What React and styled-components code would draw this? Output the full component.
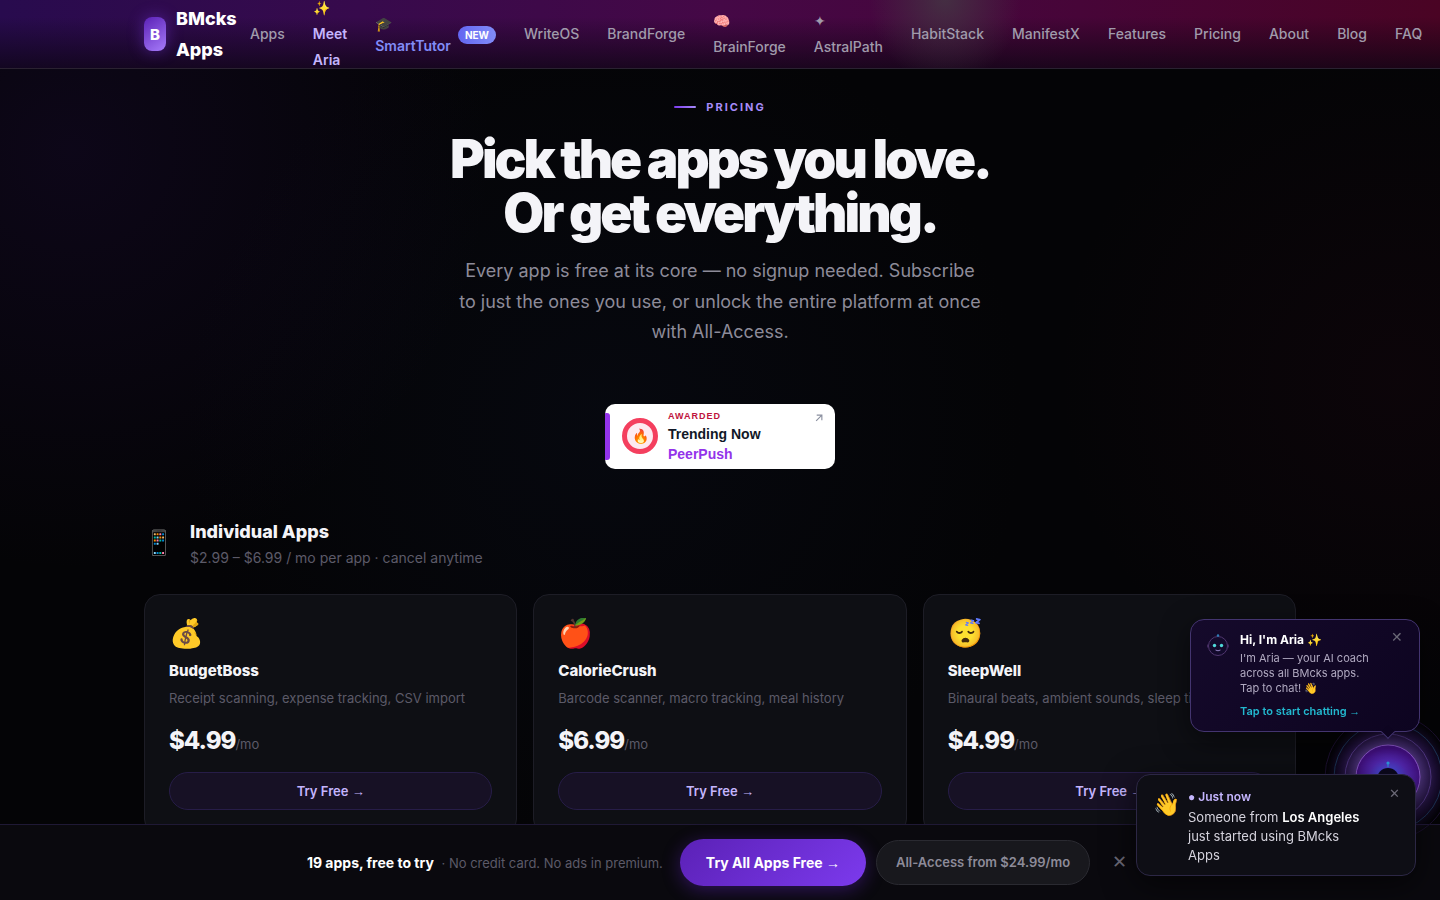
import React, { useState } from "react";
import styled, { createGlobalStyle, css } from "styled-components";

const GlobalStyle = createGlobalStyle`
  *, *::before, *::after {
    box-sizing: border-box;
  }
  html {
    overflow: hidden auto;
    scrollbar-width: none;
  }
  body {
    margin: 0;
    background: #030305;
    color: #f4f4f8;
    font-family: Inter, "Noto Sans", sans-serif;
  }
  h1, h2, h3, p, ul {
    margin: 0;
    padding: 0;
  }
  a {
    color: inherit;
    text-decoration: none;
  }
  button {
    font-family: inherit;
    border: 0;
    background: none;
    padding: 0;
    cursor: pointer;
  }
`;

const Page = styled.div`
  min-height: 100vh;
  overflow: hidden;
  background:
    radial-gradient(circle 420px at 5% 150px, rgba(60, 20, 120, 0.16), transparent),
    radial-gradient(circle 340px at 97% 380px, rgba(90, 10, 40, 0.09), transparent),
    radial-gradient(circle 420px at 42% 420px, rgba(16, 24, 50, 0.2), transparent),
    #040406;
`;

/* arrows and dots keep the plain system look */
const Glyph = styled.span`
  font-family: "Liberation Sans", Arial, sans-serif;
`;

/* ---------- nav ---------- */

const Nav = styled.nav`
  height: 69px;
  border-bottom: 1px solid #2a2231;
  background:
    radial-gradient(ellipse 76px 84px at 945px 0, rgba(68, 56, 68, 0.8), transparent),
    linear-gradient(180deg, transparent 25%, rgba(12, 5, 18, 0.75) 100%),
    linear-gradient(90deg, #280b4e 0%, #370a4c 25%, #450846 50%, #470538 75%, #4a0424 100%);
`;

const Container = styled.div`
  max-width: 1200px;
  margin: 0 auto;
  padding: 0 24px;
`;

const NavInner = styled(Container)`
  display: flex;
  align-items: center;
  gap: 12px;
  height: 100%;
`;

const Logo = styled.a`
  display: flex;
  align-items: center;
  gap: 10px;
  width: 94px;
  flex: none;
  color: #fff;
  font-size: 18px;
  font-weight: 800;
  line-height: 31px;
`;

const LogoMark = styled.span`
  display: grid;
  place-items: center;
  width: 22px;
  height: 34px;
  flex: none;
  border-radius: 8px;
  background: linear-gradient(145deg, #5b21b6, #a67bfa);
  box-shadow: 0 0 16px rgba(124, 58, 237, 0.45);
  font-size: 15px;
`;

const NavLinks = styled.ul`
  display: flex;
  align-items: center;
  gap: 28px;
  list-style: none;
`;

const tones = {
  aria: css`
    color: #c4b5fd;
    font-weight: 600;
  `,
  tutor: css`
    padding-top: 2px;
    color: #818cf8;
    font-weight: 600;
    line-height: 22px;
  `,
};

const NavLink = styled.a`
  display: flex;
  align-items: center;
  gap: 7px;
  color: #a09bab;
  font-size: 14px;
  font-weight: 500;
  line-height: 26px;
  ${({ $tone }) => tones[$tone]}
`;

const NavText = styled.span`
  width: min-content;
`;

const NewTag = styled.span`
  padding: 0 7px;
  border-radius: 10px;
  background: linear-gradient(90deg, #6366f1, #818cf8);
  color: #fff;
  font-size: 10px;
  font-weight: 700;
  line-height: 18px;
`;

/* ---------- hero ---------- */

const Hero = styled.header`
  display: flex;
  flex-direction: column;
  align-items: center;
  padding: 28px 24px 0;
  text-align: center;
`;

const Eyebrow = styled.p`
  display: flex;
  align-items: center;
  gap: 10px;
  color: #a78bfa;
  font-size: 11px;
  font-weight: 700;
  letter-spacing: 2px;
  line-height: 20px;

  &::before {
    content: "";
    width: 22px;
    height: 2px;
    border-radius: 1px;
    background: linear-gradient(90deg, #7c3aed, #a78bfa);
  }
`;

const Title = styled.h1`
  margin-top: 15px;
  font-size: 53px;
  font-weight: 900;
  letter-spacing: -3px;
  line-height: 54px;
`;

const Lead = styled.p`
  max-width: 526px;
  margin-top: 16px;
  color: #8d8b99;
  font-size: 18px;
  line-height: 1.7;
`;

const Award = styled.a`
  position: relative;
  display: flex;
  align-items: center;
  gap: 10px;
  width: 230px;
  height: 65px;
  margin-top: 56px;
  padding-left: 17px;
  overflow: hidden;
  border-radius: 10px;
  background: #fff;
  text-align: left;

  &::before {
    content: "";
    position: absolute;
    top: 9px;
    bottom: 9px;
    left: 0;
    width: 5px;
    border-radius: 0 3px 3px 0;
    background: #9333ea;
  }
`;

const AwardSeal = styled.span`
  display: grid;
  place-items: center;
  width: 36px;
  height: 36px;
  border: 5px solid #f43f5e;
  border-radius: 50%;
  background: #fdeaf0;
  font-size: 14px;
  line-height: 1;
`;

const AwardText = styled.span`
  display: flex;
  flex-direction: column;
  color: #111827;
  font-family: "Liberation Sans", Arial, sans-serif;
  font-size: 14px;
  font-weight: 700;
  line-height: 20px;
`;

const AwardLabel = styled.span`
  color: #be123c;
  font-size: 9px;
  letter-spacing: 1px;
  line-height: 16px;
`;

const AwardBrand = styled.span`
  color: #9333ea;
`;

const AwardArrow = styled.svg`
  position: absolute;
  top: 10px;
  right: 12px;
`;

/* ---------- apps ---------- */

const SectionHead = styled.div`
  display: flex;
  align-items: center;
  gap: 16px;
  margin-top: 48px;
`;

const SectionIcon = styled.span`
  width: 30px;
  font-size: 24px;
  line-height: 32px;
`;

const SectionTitle = styled.h2`
  font-size: 18px;
  font-weight: 800;
  line-height: 30px;
`;

const SectionNote = styled.p`
  color: #5c5a68;
  font-size: 14px;
  line-height: 22px;
`;

const Grid = styled.div`
  display: grid;
  grid-template-columns: repeat(3, 1fr);
  gap: 16px;
  margin-top: 25px;
  padding-bottom: 120px;
`;

const Card = styled.article`
  display: flex;
  flex-direction: column;
  padding: 20px 24px 24px;
  border: 1px solid #1d1d26;
  border-radius: 16px;
  background: #0e0f14;
`;

const CardIcon = styled.span`
  font-size: 28px;
  line-height: 36px;
`;

const CardName = styled.h3`
  margin-top: 7px;
  font-size: 15px;
  font-weight: 800;
  line-height: 26px;
`;

const CardText = styled.p`
  margin-top: 4px;
  overflow: hidden;
  color: #5c5a68;
  font-size: 13px;
  line-height: 20px;
  white-space: nowrap;
`;

const Price = styled.p`
  margin-top: 14px;
  font-size: 24px;
  font-weight: 800;
  letter-spacing: -1px;
  line-height: 38px;
`;

const Per = styled.span`
  color: #5c5a68;
  font-size: 13px;
  font-weight: 400;
  letter-spacing: 0;
`;

const TryButton = styled.button`
  height: 38px;
  margin-top: 9px;
  border: 1px solid #271d48;
  border-radius: 19px;
  background: #171125;
  color: #c4b5fd;
  font-size: 13px;
  font-weight: 600;
`;

/* ---------- floating pieces ---------- */

const StickyBar = styled.aside`
  position: fixed;
  right: 0;
  bottom: 0;
  left: 0;
  display: flex;
  align-items: center;
  justify-content: center;
  height: 76px;
  padding: 0 6px 1px 0;
  border-top: 1px solid #1f1935;
  background: #0a090e;
`;

const BarText = styled.p`
  margin-right: 17px;
  color: #5c5a68;
  font-size: 13px;
`;

const BarStrong = styled.strong`
  margin-right: 4px;
  color: #fff;
  font-size: 14px;
  font-weight: 700;
`;

const PrimaryButton = styled.button`
  height: 47px;
  margin-right: 10px;
  padding: 0 26px;
  border-radius: 24px;
  background: linear-gradient(135deg, #5b21b6, #7c3aed);
  box-shadow: 0 4px 18px rgba(91, 33, 182, 0.45);
  color: #fff;
  font-size: 14px;
  font-weight: 700;
`;

const GhostButton = styled.button`
  height: 45px;
  margin-right: 22px;
  padding: 0 19px;
  border: 1px solid #2a2a31;
  border-radius: 23px;
  background: #18181d;
  color: #8d8b99;
  font-size: 13px;
  font-weight: 600;
`;

const CloseButton = styled.button`
  color: #6b6977;
  font-size: ${({ $size }) => $size}px;
  line-height: 16px;
`;

const Orb = styled.button`
  position: fixed;
  right: -12px;
  bottom: 59px;
  width: 128px;
  height: 128px;

  svg {
    display: block;
  }
`;

const Bubble = styled.aside`
  position: fixed;
  right: 20px;
  bottom: 168px;
  display: flex;
  align-items: flex-start;
  gap: 11px;
  width: 230px;
  height: 113px;
  padding: 12px 16px;
  border: 1px solid #43346f;
  border-radius: 14px;
  background: linear-gradient(135deg, #150a2b, #0d0420);
  box-shadow: 0 8px 28px rgba(0, 0, 0, 0.5);

  &::after {
    content: "";
    position: absolute;
    right: 26px;
    bottom: -6px;
    width: 10px;
    height: 10px;
    border: solid #43346f;
    border-width: 0 1px 1px 0;
    background: #0d0420;
    transform: rotate(45deg);
  }
`;

const BubbleBody = styled.div`
  flex: 1;
`;

const BubbleTitle = styled.p`
  color: #fff;
  font-size: 12px;
  font-weight: 700;
  line-height: 16px;
`;

const BubbleText = styled.p`
  margin-top: 3px;
  color: #b0a9c0;
  font-size: 11px;
  line-height: 15px;
  white-space: nowrap;
`;

const BubbleLink = styled.a`
  display: block;
  margin-top: 7px;
  color: #22b8cf;
  font-size: 11px;
  font-weight: 600;
  line-height: 16px;
`;

const BubbleClose = styled(CloseButton)`
  position: absolute;
  top: 9px;
  right: 16px;
`;

const Toast = styled.aside`
  position: fixed;
  right: 24px;
  bottom: 24px;
  display: flex;
  align-items: flex-start;
  gap: 8px;
  width: 280px;
  height: 102px;
  padding: 12px 16px;
  border: 1px solid #2c2745;
  border-radius: 14px;
  background: #0e0e15;
  box-shadow: 0 8px 32px rgba(0, 0, 0, 0.6);
`;

const ToastIcon = styled.span`
  width: 27px;
  flex: none;
  font-size: 22px;
  line-height: 34px;
`;

const ToastTime = styled.p`
  color: #c4b5fd;
  font-size: 12px;
  font-weight: 600;
  line-height: 20px;
`;

const ToastText = styled.p`
  max-width: 180px;
  margin-top: 1px;
  color: #d4d2dc;
  font-size: 13px;
  line-height: 19px;

  strong {
    color: #fff;
    font-weight: 600;
  }
`;

const ToastClose = styled(CloseButton)`
  position: absolute;
  top: 10px;
  right: 15px;
`;

const links = [
  { label: "Apps" },
  { label: "✨ Meet Aria", tone: "aria" },
  { label: "🎓 SmartTutor", tone: "tutor", tag: "NEW" },
  { label: "WriteOS" },
  { label: "BrandForge" },
  { label: "🧠 BrainForge" },
  { label: "✦ AstralPath" },
  { label: "HabitStack" },
  { label: "ManifestX" },
  { label: "Features" },
  { label: "Pricing" },
  { label: "About" },
  { label: "Blog" },
  { label: "FAQ" },
];

const apps = [
  { icon: "💰", name: "BudgetBoss", text: "Receipt scanning, expense tracking, CSV import", price: "$4.99" },
  { icon: "🍎", name: "CalorieCrush", text: "Barcode scanner, macro tracking, meal history", price: "$6.99" },
  { icon: "😴", name: "SleepWell", text: "Binaural beats, ambient sounds, sleep timer", price: "$4.99" },
];

function AriaFace() {
  return (
    <svg width="22" height="26" viewBox="0 0 22 26" fill="none" aria-hidden="true">
      <circle cx="11" cy="14" r="9.5" fill="#130a2c" stroke="#50366f" />
      <path d="M11 4.500V3" stroke="#2e7fb8" />
      <circle cx="11" cy="3.5" r="1.2" fill="#2e7fb8" />
      <path d="M.8 12.500v3M21.200 12.500v3" stroke="#50366f" />
      <circle cx="7.5" cy="13.5" r="1.7" fill="#4fd8d8" />
      <circle cx="14.5" cy="13.5" r="1.7" fill="#4fd8d8" />
      <path d="M8.500 18q2.500 1.600 5 0" stroke="#8f7fc0" />
    </svg>
  );
}

function AriaOrb() {
  return (
    <svg width="128" height="128" viewBox="0 0 128 128" fill="none" aria-hidden="true">
      <defs>
        <radialGradient id="halo">
          <stop offset="0.5" stopColor="#6a48a8" stopOpacity="0.7" />
          <stop offset="0.75" stopColor="#40207a" stopOpacity="0.4" />
          <stop offset="1" stopColor="#2c1060" stopOpacity="0" />
        </radialGradient>
        <radialGradient id="core" cx="0.5" cy="0.55">
          <stop offset="0.3" stopColor="#4a4fe0" />
          <stop offset="0.65" stopColor="#5327b0" />
          <stop offset="1" stopColor="#421080" />
        </radialGradient>
      </defs>
      <circle cx="64" cy="64" r="63" fill="url(#halo)" />
      <circle cx="64" cy="64" r="63" stroke="#1c1030" />
      <circle cx="64" cy="64" r="54" stroke="#1c3355" />
      <circle cx="64" cy="64" r="43" stroke="#4f3580" />
      <circle cx="64" cy="64" r="32" fill="url(#core)" stroke="#8a57c8" />
      <path d="M64 54v-4" stroke="#2f9fe8" />
      <circle cx="64" cy="50" r="1.6" fill="#2f9fe8" />
      <circle cx="64" cy="66" r="11" fill="#0d0a20" />
    </svg>
  );
}

export default function App() {
  const [bar, setBar] = useState(true);
  const [bubble, setBubble] = useState(true);
  const [toast, setToast] = useState(true);

  return (
    <Page>
      <GlobalStyle />
      <Nav>
        <NavInner>
          <Logo href="#">
            <LogoMark>B</LogoMark>
            BMcks Apps
          </Logo>
          <NavLinks>
            {links.map((item) => (
              <li key={item.label}>
                <NavLink href="#" $tone={item.tone}>
                  <NavText>{item.label}</NavText>
                  {item.tag && <NewTag>{item.tag}</NewTag>}
                </NavLink>
              </li>
            ))}
          </NavLinks>
        </NavInner>
      </Nav>

      <Hero>
        <Eyebrow>PRICING</Eyebrow>
        <Title>
          Pick the apps you love.
          <br />
          Or get everything.
        </Title>
        <Lead>
          Every app is free at its core — no signup needed. Subscribe to just the ones you use, or
          unlock the entire platform at once with All-Access.
        </Lead>
        <Award href="#">
          <AwardSeal>🔥</AwardSeal>
          <AwardText>
            <AwardLabel>AWARDED</AwardLabel>
            <span>Trending Now</span>
            <AwardBrand>PeerPush</AwardBrand>
          </AwardText>
          <AwardArrow width="8" height="8" viewBox="0 0 7 7" fill="none" stroke="#8b90a0" aria-hidden="true">
            <path d="M1 6l5-5M1.500 1H6v4.500" />
          </AwardArrow>
        </Award>
      </Hero>

      <Container as="main">
        <SectionHead>
          <SectionIcon>📱</SectionIcon>
          <div>
            <SectionTitle>Individual Apps</SectionTitle>
            <SectionNote>$2.99 – $6.99 / mo per app · cancel anytime</SectionNote>
          </div>
        </SectionHead>
        <Grid>
          {apps.map((app) => (
            <Card key={app.name}>
              <CardIcon>{app.icon}</CardIcon>
              <CardName>{app.name}</CardName>
              <CardText>{app.text}</CardText>
              <Price>
                {app.price}
                <Per>/mo</Per>
              </Price>
              <TryButton>
                Try Free <Glyph>→</Glyph>
              </TryButton>
            </Card>
          ))}
        </Grid>
      </Container>

      {bar && (
        <StickyBar>
          <BarText>
            <BarStrong>19 apps, free to try</BarStrong> · No credit card. No ads in premium.
          </BarText>
          <PrimaryButton>
            Try All Apps Free <Glyph>→</Glyph>
          </PrimaryButton>
          <GhostButton>All-Access from $24.99/mo</GhostButton>
          <CloseButton $size={18} aria-label="Dismiss bar" onClick={() => setBar(false)}>
            ✕
          </CloseButton>
        </StickyBar>
      )}

      <Orb aria-label="Chat with Aria">
        <AriaOrb />
      </Orb>

      {bubble && (
        <Bubble>
          <AriaFace />
          <BubbleBody>
            <BubbleTitle>Hi, I'm Aria ✨</BubbleTitle>
            <BubbleText>
              I'm Aria — your AI coach
              <br />
              across all BMcks apps.
              <br />
              Tap to chat! 👋
            </BubbleText>
            <BubbleLink href="#">
              Tap to start chatting <Glyph>→</Glyph>
            </BubbleLink>
          </BubbleBody>
          <BubbleClose $size={14} aria-label="Close message" onClick={() => setBubble(false)}>
            ✕
          </BubbleClose>
        </Bubble>
      )}

      {toast && (
        <Toast>
          <ToastIcon>👋</ToastIcon>
          <div>
            <ToastTime>
              <Glyph>●</Glyph> Just now
            </ToastTime>
            <ToastText>
              Someone from <strong>Los Angeles</strong> just started using BMcks Apps
            </ToastText>
          </div>
          <ToastClose $size={13} aria-label="Close notification" onClick={() => setToast(false)}>
            ✕
          </ToastClose>
        </Toast>
      )}
    </Page>
  );
}
